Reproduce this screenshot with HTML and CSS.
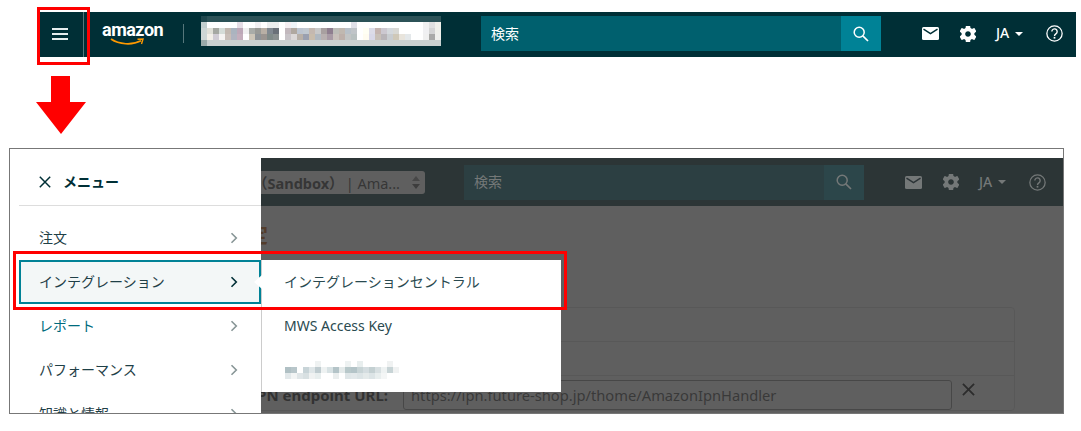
FILE: index.html
```html
<!DOCTYPE html>
<html lang="ja">
<head>
  <meta charset="UTF-8">
  <meta name="viewport" content="width=device-width, initial-scale=1.0">
  <title>メニュー</title>
  <link rel="stylesheet" href="styles.css">
</head>
<body>
  <!-- icons used in both headers -->
  <svg class="icon-defs">
    <symbol id="i-search" viewBox="0 0 16 16">
      <circle cx="6.2" cy="6.2" r="5" fill="none" stroke="currentColor" stroke-width="1.5"/>
      <path d="M9.8 9.8 15 15" fill="none" stroke="currentColor" stroke-width="1.7"/>
    </symbol>
    <symbol id="i-mail" viewBox="0 0 17 13">
      <rect width="17" height="13" rx="1.5" fill="currentColor"/>
      <path class="mail-flap" d="M1.5 2.2 8.5 6.6 15.5 2.2" fill="none" stroke-width="1.5"/>
    </symbol>
    <symbol id="i-gear" viewBox="3 3 18 18">
      <path fill="currentColor" fill-rule="evenodd" d="M19.14 12.94c.04-.3.06-.61.06-.94 0-.32-.02-.64-.07-.94l2.03-1.58c.18-.14.23-.41.12-.61l-1.92-3.32c-.12-.22-.37-.29-.59-.22l-2.39.96c-.5-.38-1.03-.7-1.62-.94l-.36-2.54c-.04-.24-.24-.41-.48-.41h-3.84c-.24 0-.43.17-.47.41l-.36 2.54c-.59.24-1.13.57-1.62.94l-2.39-.96c-.22-.08-.47 0-.59.22L2.74 8.87c-.12.21-.08.47.12.61l2.03 1.58c-.05.3-.09.63-.09.94s.02.64.07.94l-2.03 1.58c-.18.14-.23.41-.12.61l1.92 3.32c.12.22.37.29.59.22l2.39-.96c.5.38 1.03.7 1.62.94l.36 2.54c.05.24.24.41.48.41h3.84c.24 0 .44-.17.47-.41l.36-2.54c.59-.24 1.13-.56 1.62-.94l2.39.96c.22.08.47 0 .59-.22l1.92-3.32c.12-.22.07-.47-.12-.61l-2.01-1.58zM12 15.2c-1.77 0-3.2-1.43-3.2-3.2s1.43-3.2 3.2-3.2 3.2 1.43 3.2 3.2-1.43 3.2-3.2 3.2z"/>
    </symbol>
    <symbol id="i-help" viewBox="0 0 16 16">
      <circle cx="8" cy="8" r="7.2" fill="none" stroke="currentColor" stroke-width="1.2"/>
      <path d="M5.5 6.2a2.5 2.5 0 1 1 3.8 2.1c-.9.6-1.3 1-1.3 2" fill="none" stroke="currentColor" stroke-width="1.3"/>
      <rect x="7.2" y="11.2" width="1.6" height="1.6" fill="currentColor"/>
    </symbol>
    <symbol id="i-chevron" viewBox="0 0 8 12">
      <path d="M1.5 1.2 6.3 6 1.5 10.8" fill="none" stroke="currentColor" stroke-width="1.6"/>
    </symbol>
  </svg>

  <header class="bar bar-live">
    <div class="burger"><span></span><span></span><span></span></div>
    <div class="logo">
      <span class="logo-text">amazon</span>
      <svg class="logo-smile" width="36" height="8" viewBox="0 0 36 8">
        <path d="M1 1C9 6.500 22 7.500 31 2.800" fill="none" stroke="#f90" stroke-width="1.700"/>
        <path d="M27.500 1.300 33 1 31.500 6" fill="none" stroke="#f90" stroke-width="1.400"/>
      </svg>
    </div>
    <span class="logo-rule"></span>
    <svg class="mosaic mosaic-store" width="240" height="30" viewBox="0 0 240 30" shape-rendering="crispEdges">
      <rect class="wide" x="0" y="0" fill="#2c5257"/>
      <rect class="wide" x="0" y="6" fill="#fff"/>
      <rect class="wide" x="0" y="12" fill="#fff"/>
      <rect class="wide" x="0" y="18" fill="#fff"/>
      <rect class="wide" x="0" y="24" fill="#c8d0d0"/>
      <rect x="0" y="0" fill="#1f474d"/><rect x="0" y="6" fill="#c3cfcf"/><rect x="0" y="12" fill="#cdd6d5"/><rect x="0" y="18" fill="#cdd6d5"/><rect x="0" y="24" fill="#9aabab"/>
      <rect x="36" y="6" fill="#e5dde5"/><rect x="54" y="6" fill="#f2f0f2"/><rect x="66" y="6" fill="#eceeee"/><rect x="72" y="6" fill="#eceeee"/><rect x="84" y="6" fill="#f5eff2"/><rect x="90" y="6" fill="#eef3f8"/><rect x="150" y="6" fill="#e0e0e8"/><rect x="222" y="6" fill="#f0f0f0"/><rect x="228" y="6" fill="#e0e0e0"/><rect x="234" y="6" fill="#f0f0ea"/>
      <rect x="6" y="12" fill="#e0e0d8"/><rect x="12" y="12" fill="#a5a8a2"/><rect x="18" y="12" fill="#d5dcd8"/><rect x="24" y="12" fill="#c2b8b0"/><rect x="30" y="12" fill="#aab4bf"/><rect x="36" y="12" fill="#bda8b8"/><rect x="42" y="12" fill="#f0f0f0"/><rect x="48" y="12" fill="#a9aca8"/><rect x="54" y="12" fill="#999a96"/><rect x="60" y="12" fill="#b8afa5"/><rect x="66" y="12" fill="#808890"/><rect x="72" y="12" fill="#6a7078"/><rect x="84" y="12" fill="#c2b8bd"/><rect x="90" y="12" fill="#b0a8a0"/><rect x="96" y="12" fill="#bcc4d0"/><rect x="102" y="12" fill="#c0c8d0"/><rect x="108" y="12" fill="#c4b8b0"/><rect x="114" y="12" fill="#c8c8c8"/>
      <rect x="120" y="12" fill="#a8a0a0"/><rect x="126" y="12" fill="#8f7e8f"/><rect x="132" y="12" fill="#bdbdb8"/><rect x="138" y="12" fill="#c0b8b0"/><rect x="144" y="12" fill="#b8c0c8"/><rect x="150" y="12" fill="#c0c4c8"/><rect x="162" y="12" fill="#fffff4"/><rect x="168" y="12" fill="#dcdce8"/><rect x="174" y="12" fill="#c4b4b0"/><rect x="180" y="12" fill="#ccc8d0"/><rect x="186" y="12" fill="#d4d8dc"/><rect x="192" y="12" fill="#d8d8d4"/><rect x="222" y="12" fill="#f0f0f2"/><rect x="228" y="12" fill="#d4d4d4"/><rect x="234" y="12" fill="#f0f0ea"/>
      <rect x="6" y="18" fill="#f2efe8"/><rect x="12" y="18" fill="#d0ccd4"/><rect x="18" y="18" fill="#f5f3f2"/><rect x="24" y="18" fill="#c8beb8"/><rect x="30" y="18" fill="#b0b4c0"/><rect x="36" y="18" fill="#c4aebc"/><rect x="48" y="18" fill="#cdc6b8"/><rect x="54" y="18" fill="#8f9498"/><rect x="60" y="18" fill="#9a9490"/><rect x="66" y="18" fill="#7f8a88"/><rect x="72" y="18" fill="#8a9090"/><rect x="84" y="18" fill="#c8c4c8"/><rect x="90" y="18" fill="#dcd8d8"/><rect x="96" y="18" fill="#b8b0a8"/><rect x="102" y="18" fill="#9aa0b0"/><rect x="108" y="18" fill="#c8bcac"/><rect x="114" y="18" fill="#b0b8c0"/>
      <rect x="120" y="18" fill="#b8b0b0"/><rect x="126" y="18" fill="#a89aa5"/><rect x="132" y="18" fill="#c8c0bb"/><rect x="138" y="18" fill="#bdb0aa"/><rect x="144" y="18" fill="#c2c4c4"/><rect x="150" y="18" fill="#b8c0c0"/><rect x="162" y="18" fill="#fffcf0"/><rect x="168" y="18" fill="#d8d8e8"/><rect x="174" y="18" fill="#c8c0b8"/><rect x="180" y="18" fill="#b8b4b8"/><rect x="186" y="18" fill="#c8ccd0"/><rect x="192" y="18" fill="#cfc8b8"/><rect x="198" y="18" fill="#e8e4dc"/><rect x="204" y="18" fill="#e4e8ea"/><rect x="222" y="18" fill="#f0f0f0"/><rect x="228" y="18" fill="#aaaaa8"/><rect x="234" y="18" fill="#f0f0ec"/>
    </svg>
    <div class="search">
      <span class="search-label">検索</span>
      <span class="search-btn"><svg width="16" height="16"><use href="#i-search"/></svg></span>
    </div>
    <div class="bar-icons">
      <svg class="icon-mail" width="17" height="13"><use href="#i-mail"/></svg>
      <svg class="icon-gear" width="16" height="16"><use href="#i-gear"/></svg>
      <span class="lang">JA<i class="caret"></i></span>
      <svg class="icon-help" width="17" height="17"><use href="#i-help"/></svg>
    </div>
  </header>

  <svg class="down-arrow" width="50" height="58" viewBox="0 0 50 58">
    <path d="M15 0H34V26H50L25 58 0 26H15Z" fill="#f00"/>
  </svg>

  <div class="shot">
    <div class="page">
      <div class="bar bar-dim">
        <div class="store-select">
          <span class="store-name"><b>店（Sandbox）</b>| Ama...</span>
          <span class="stepper"><i class="step-up"></i><i class="step-down"></i></span>
        </div>
        <div class="search">
          <span class="search-label">検索</span>
          <span class="search-btn"><svg width="16" height="16"><use href="#i-search"/></svg></span>
        </div>
        <div class="bar-icons">
          <svg class="icon-mail" width="17" height="13"><use href="#i-mail"/></svg>
          <svg class="icon-gear" width="16" height="16"><use href="#i-gear"/></svg>
          <span class="lang">JA<i class="caret"></i></span>
          <svg class="icon-help" width="17" height="17"><use href="#i-help"/></svg>
        </div>
      </div>
      <h1 class="page-title">通知設定</h1>
      <div class="settings">
        <div class="settings-row"></div>
        <div class="settings-row"></div>
        <div class="settings-url">
          <label class="url-label">IPN endpoint URL:</label>
          <div class="url-input">https://ipn.future-shop.jp/thome/AmazonIpnHandler</div>
          <svg class="url-clear" width="13" height="13" viewBox="0 0 14 14">
            <path d="M1 1 13 13M13 1 1 13" fill="none" stroke="#000" stroke-width="2"/>
          </svg>
        </div>
      </div>
      <div class="page-dim"></div>
    </div>

    <nav class="side-menu">
      <div class="side-head">
        <svg width="12" height="12" viewBox="0 0 12 12">
          <path d="M.8.8 11.200 11.200M11.200.8 .8 11.200" fill="none" stroke="#002f36" stroke-width="1.500"/>
        </svg>
        <span>メニュー</span>
      </div>
      <ul class="side-list">
        <li class="side-item">注文<svg width="8" height="12"><use href="#i-chevron"/></svg></li>
        <li class="side-item is-active">インテグレーション<svg width="8" height="12"><use href="#i-chevron"/></svg></li>
        <li class="side-item is-link">レポート<svg width="8" height="12"><use href="#i-chevron"/></svg></li>
        <li class="side-item">パフォーマンス<svg width="8" height="12"><use href="#i-chevron"/></svg></li>
        <li class="side-item">知識と情報<svg width="8" height="12"><use href="#i-chevron"/></svg></li>
      </ul>
    </nav>

    <ul class="sub-menu">
      <li class="sub-item">インテグレーションセントラル</li>
      <li class="sub-item">MWS Access Key</li>
      <li class="sub-item">
        <svg class="mosaic" width="114" height="18" viewBox="0 0 114 18" shape-rendering="crispEdges">
          <rect x="30" y="0" fill="#eff2f2"/><rect x="60" y="0" fill="#eef2f2"/><rect x="72" y="0" fill="#e8eeee"/><rect x="102" y="0" fill="#f0f2f2"/>
          <rect x="0" y="6" fill="#b0c0c4"/><rect x="6" y="6" fill="#b8c6ca"/><rect x="18" y="6" fill="#c8d4d8"/><rect x="24" y="6" fill="#dfe6e8"/><rect x="30" y="6" fill="#c0ccd0"/><rect x="36" y="6" fill="#eef2f2"/><rect x="42" y="6" fill="#d8e2e4"/><rect x="48" y="6" fill="#b4c4c8"/><rect x="54" y="6" fill="#e4eaea"/><rect x="60" y="6" fill="#b8c8ca"/><rect x="66" y="6" fill="#b4c4c8"/><rect x="72" y="6" fill="#c8d4d6"/><rect x="78" y="6" fill="#d4dde0"/><rect x="84" y="6" fill="#c4d0d2"/><rect x="90" y="6" fill="#d8e0e2"/><rect x="96" y="6" fill="#eef2f2"/><rect x="102" y="6" fill="#c8d4d6"/><rect x="108" y="6" fill="#f0f2f2"/>
          <rect x="0" y="12" fill="#e2e8ea"/><rect x="6" y="12" fill="#f2f4f4"/><rect x="12" y="12" fill="#e0e6e8"/><rect x="18" y="12" fill="#d8e0e2"/><rect x="24" y="12" fill="#f0f2f2"/><rect x="30" y="12" fill="#e8eeee"/><rect x="48" y="12" fill="#eaeeee"/><rect x="60" y="12" fill="#dfe6e8"/><rect x="66" y="12" fill="#e2e8ea"/><rect x="72" y="12" fill="#dce4e6"/><rect x="78" y="12" fill="#e4eaea"/><rect x="84" y="12" fill="#dce4e6"/><rect x="90" y="12" fill="#e8eeee"/><rect x="96" y="12" fill="#f4f6f6"/>
        </svg>
      </li>
    </ul>
  </div>

  <!-- red callouts drawn on top of the screenshot -->
  <div class="callout callout-burger"></div>
  <div class="callout callout-integration"></div>
</body>
</html>
```

FILE: styles.css
```css
/* page */
body {
  position: relative;
  margin: 0;
  height: 431px;
  overflow: hidden;
  background-color: #fff;
  font-family: "Noto Sans", "Noto Sans CJK JP", sans-serif;
  font-size: 14px;
  color: #002f36;
}

ul {
  margin: 0;
  padding: 0;
  list-style: none;
}

.icon-defs {
  display: none;
}

.mail-flap {
  stroke: var(--bar-bg);
}

/* header bar, used live and under the dim layer */
.bar {
  --bar-bg: #002f36;
  display: flex;
  align-items: center;
  background-color: #002f36;
  color: #fff;
}

.bar-live {
  box-sizing: border-box;
  height: 45px;
  margin: 12px 5px 0 40px;
  padding-bottom: 2px;
}

.bar-dim {
  height: 48px;
  padding-left: 200px;
}

.burger {
  display: flex;
  flex-direction: column;
  justify-content: center;
  gap: 3px;
  box-sizing: border-box;
  width: 44px;
  height: 45px;
  margin-bottom: -2px;
  padding: 0 15px 2px 12px;
  border-right: 1px solid #56777b;
}

.burger span {
  height: 2px;
  background-color: #e6eeee;
}

.logo {
  position: relative;
  width: 62px;
  height: 30px;
  margin-left: 18px;
  margin-right: 19px;
}

.logo-text {
  display: block;
  margin-top: -1px;
  font-family: Roboto, sans-serif;
  font-size: 18px;
  font-weight: 700;
  line-height: 24px;
  letter-spacing: -0.5px;
}

.logo-smile {
  position: absolute;
  left: 8px;
  top: 19px;
}

.logo-rule {
  width: 1px;
  height: 19px;
  margin-right: 17px;
  background-color: #56777b;
}

.mosaic {
  display: block;
}

.mosaic rect {
  width: 6px;
  height: 6px;
}

.mosaic .wide {
  width: 240px;
}

.mosaic-store {
  margin-bottom: 5px;
}

.search {
  display: flex;
  align-items: center;
  justify-content: space-between;
  width: 400px;
  height: 35px;
  background-color: #00606e;
}

.bar-live .search {
  margin-left: 40px;
}

.search-label {
  padding: 0 0 2px 10px;
}

.search-btn {
  display: flex;
  align-items: center;
  justify-content: center;
  width: 40px;
  height: 35px;
  background-color: #008296;
}

.bar-icons {
  display: flex;
  align-items: center;
  margin-left: 41px;
}

.icon-gear {
  margin-left: 21px;
}

.lang {
  display: flex;
  align-items: center;
  gap: 6px;
  margin-left: 20px;
  padding-bottom: 2px;
  font-weight: 500;
}

.caret {
  width: 0;
  height: 0;
  margin-top: 2px;
  border-left: 4.500px solid transparent;
  border-right: 4.500px solid transparent;
  border-top: 4.500px solid currentColor;
}

.icon-help {
  margin-left: 23px;
}

/* the dim layer flattens white too much, so icons sit above it in their own grey */
.bar-dim {
  --bar-bg: #2c3437;
}

.bar-dim .bar-icons,
.bar-dim .search-label,
.bar-dim .search-btn svg {
  position: relative;
  z-index: 1;
  color: #747878;
}

/* big arrow between the two shots */
.down-arrow {
  display: block;
  margin: 19px 0 0 36px;
}

/* framed screenshot */
.shot {
  position: relative;
  box-sizing: border-box;
  width: 1055px;
  height: 266px;
  margin: 14px 0 0 9px;
  padding-top: 9px;
  border: 1px solid #777;
  overflow: hidden;
}

.page {
  position: relative;
  height: 256px;
  overflow: hidden;
}

.store-select {
  display: flex;
  align-items: center;
  justify-content: flex-end;
  width: 215px;
  height: 23px;
  margin-right: 39px;
  border-radius: 3px;
  background-color: #fff;
  color: #333;
  font-size: 14.500px;
}

.store-name {
  white-space: nowrap;
}

.store-name b {
  margin-right: 2px;
}

.stepper {
  display: flex;
  flex-direction: column;
  gap: 3px;
  margin: 0 5px 0 12px;
}

.step-up,
.step-down {
  width: 0;
  height: 0;
  border-left: 4px solid transparent;
  border-right: 4px solid transparent;
}

.step-up {
  border-bottom: 5px solid #888;
}

.step-down {
  border-top: 5px solid #555;
}

.page-title {
  margin: 16px 0 0 178px;
  color: #c45500;
  font-size: 20px;
  font-weight: 700;
  line-height: 28px;
}

.settings {
  box-sizing: border-box;
  width: 915px;
  margin: 57px 0 0 90px;
  border: 1px solid #ddd;
  border-radius: 4px;
}

.settings-row {
  height: 33px;
  border-bottom: 1px solid #ddd;
}

.settings-url {
  display: flex;
  align-items: flex-start;
  padding-top: 4px;
}

.url-label {
  width: 287px;
  color: #222;
  font-size: 15px;
  font-weight: 700;
  line-height: 30px;
  text-align: right;
}

.url-input {
  box-sizing: border-box;
  width: 549px;
  height: 30px;
  margin-left: 15px;
  padding-left: 7px;
  border: 1px solid #888;
  border-radius: 3px;
  color: #444;
  font-size: 14.700px;
  line-height: 28px;
}

.url-clear {
  margin: 3px 0 0 10px;
}

.page-dim {
  position: absolute;
  inset: 0;
  background-color: rgba(55, 55, 55, 0.8);
}

/* left panel */
.side-menu {
  position: absolute;
  left: 0;
  top: 0;
  z-index: 2;
  width: 251px;
  height: 100%;
  background-color: #fff;
}

.side-head {
  display: flex;
  align-items: center;
  gap: 12px;
  box-sizing: border-box;
  height: 57px;
  margin-left: 9px;
  padding: 9px 0 0 20px;
  border-bottom: 1px solid #ddd;
  font-weight: 700;
}

.side-head span {
  padding-bottom: 2px;
}

.side-list {
  margin: 10px 0 0 9px;
}

.side-item {
  display: flex;
  align-items: center;
  justify-content: space-between;
  box-sizing: border-box;
  height: 44px;
  padding: 0 23px 2px 20px;
  color: #1f4047;
}

.side-item svg {
  margin-top: 2px;
  color: #879596;
}

.is-link {
  color: #006b7d;
}

.is-active {
  padding: 0 21px 2px 18px;
  border: 2px solid #008296;
  background-color: #f3f7f7;
}

.is-active svg {
  color: #002f36;
}

/* flyout */
.sub-menu {
  position: absolute;
  left: 251px;
  top: 111px;
  z-index: 2;
  box-sizing: border-box;
  width: 300px;
  height: 132px;
  border-left: 1px solid #ccc;
  background-color: #fff;
  color: #2a4a50;
}

.sub-menu::before {
  content: "";
  position: absolute;
  left: -8px;
  top: 15px;
  border-top: 7px solid transparent;
  border-bottom: 7px solid transparent;
  border-right: 8px solid #fff;
}

.sub-item {
  display: flex;
  align-items: center;
  box-sizing: border-box;
  height: 44px;
  padding: 0 0 2px 22px;
}

.sub-item .mosaic {
  margin: 2px 0 0 1px;
}

/* red callouts */
.callout {
  position: absolute;
  z-index: 3;
  box-sizing: border-box;
  border: 3px solid #f00;
}

.callout-burger {
  left: 37px;
  top: 7px;
  width: 53px;
  height: 58px;
}

.callout-integration {
  left: 13px;
  top: 251px;
  width: 554px;
  height: 59px;
}
```
